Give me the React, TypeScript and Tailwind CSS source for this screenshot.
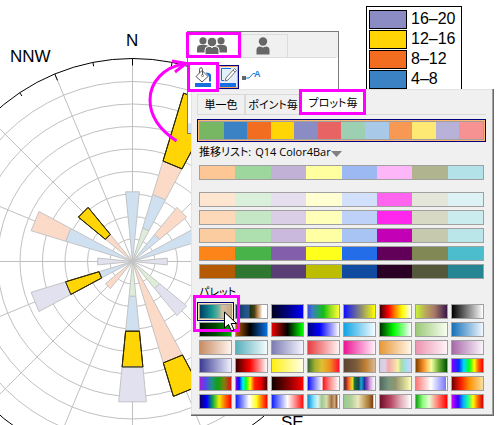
import { useState } from 'react';
import clsx from 'clsx';

type BarKind = 'blue' | 'peach' | 'green' | 'lavender' | 'yellow';

interface Petal {
  angle: number;
  parts: { to: number; kind: BarKind }[];
}

const CX = 132.5;
const CY = 261.5;
const RING = 22.5;
const HALF_WIDTH = 5.625;

const barFill: Record<BarKind, string> = {
  blue: 'fill-[#cfe0f1] stroke-[#c4c4c4]',
  peach: 'fill-[#fcdac8] stroke-[#c4c4c4]',
  green: 'fill-[#ddedd8] stroke-[#c4c4c4]',
  lavender: 'fill-[#e1e1f0] stroke-[#c4c4c4]',
  yellow: 'fill-[#ffd505] stroke-[#2b2605]',
};

// radius of each stacked part, clockwise from north
const petals: Petal[] = [
  { angle: 0, parts: [{ to: 70, kind: 'blue' }] },
  {
    angle: 22.5,
    parts: [
      { to: 35, kind: 'green' },
      { to: 70, kind: 'blue' },
      { to: 105, kind: 'peach' },
      { to: 176, kind: 'yellow' },
    ],
  },
  { angle: 45, parts: [{ to: 35, kind: 'blue' }, { to: 70, kind: 'peach' }] },
  { angle: 67.5, parts: [{ to: 105, kind: 'blue' }] },
  { angle: 90, parts: [{ to: 35, kind: 'lavender' }] },
  { angle: 135, parts: [{ to: 35, kind: 'green' }, { to: 70, kind: 'lavender' }] },
  { angle: 157.5, parts: [{ to: 106, kind: 'peach' }, { to: 141, kind: 'yellow' }] },
  {
    angle: 180,
    parts: [
      { to: 35, kind: 'green' },
      { to: 70, kind: 'blue' },
      { to: 106, kind: 'yellow' },
      { to: 141, kind: 'lavender' },
    ],
  },
  { angle: 225, parts: [{ to: 35, kind: 'peach' }] },
  {
    angle: 247.5,
    parts: [
      { to: 35, kind: 'blue' },
      { to: 70, kind: 'yellow' },
      { to: 106, kind: 'lavender' },
    ],
  },
  { angle: 270, parts: [{ to: 35, kind: 'lavender' }] },
  { angle: 292.5, parts: [{ to: 70, kind: 'blue' }, { to: 106, kind: 'peach' }] },
  { angle: 315, parts: [{ to: 35, kind: 'peach' }, { to: 70, kind: 'yellow' }] },
];

const legend = [
  { label: '16–20', color: 'bg-[#8b8cc4]' },
  { label: '12–16', color: 'bg-[#ffd505]' },
  { label: '8–12', color: 'bg-[#f36d21]' },
  { label: '4–8', color: 'bg-[#3b82c4]' },
];

const activeColors = [
  'bg-[#77b662]', 'bg-[#3b82c4]', 'bg-[#f36d21]', 'bg-[#ffd505]',
  'bg-[#8b8cc4]', 'bg-[#e86464]', 'bg-[#9dcfb2]', 'bg-[#a9c9e8]',
  'bg-[#f79853]', 'bg-[#ffe975]', 'bg-[#b8b2d8]', 'bg-[#f69292]',
];

const baseColors = [
  'bg-[#fcc795]', 'bg-[#9dd79d]', 'bg-[#c1b1d7]', 'bg-[#ffffa0]',
  'bg-[#9cb9f4]', 'bg-[#fdb6f8]', 'bg-[#b1b58f]', 'bg-[#b3e3e9]',
];

const variations = [
  [
    'bg-[#fee5d0]', 'bg-[#daf0da]', 'bg-[#e5deee]', 'bg-[#ffffd2]',
    'bg-[#d3e0fb]', 'bg-[#ff64ee]', 'bg-[#e5e6da]', 'bg-[#dcf2f4]',
  ],
  [
    'bg-[#fed9b9]', 'bg-[#c6e7c5]', 'bg-[#dacde6]', 'bg-[#ffffba]',
    'bg-[#bdd1f9]', 'bg-[#ff26ee]', 'bg-[#d8d9c4]', 'bg-[#caecee]',
  ],
  [
    'bg-[#fccca1]', 'bg-[#aedfae]', 'bg-[#cab9dc]', 'bg-[#ffffa4]',
    'bg-[#a7c4f5]', 'bg-[#c400b6]', 'bg-[#c6c9ad]', 'bg-[#bae6ea]',
  ],
  [
    'bg-[#fd8418]', 'bg-[#48b348]', 'bg-[#835eab]', 'bg-[#ffff1c]',
    'bg-[#246de8]', 'bg-[#620059]', 'bg-[#828756]', 'bg-[#4cbdcd]',
  ],
  [
    'bg-[#b45a03]', 'bg-[#2f7731]', 'bg-[#583e74]', 'bg-[#bdbd00]',
    'bg-[#114b9f]', 'bg-[#2a0025]', 'bg-[#55573b]', 'bg-[#258593]',
  ],
];

const palettes: string[][] = [
  ['#00405f', '#0a6a80', '#1a9a92', '#6fb09a 60%', '#d2bfa2 72%', '#c4aa88'],
  ['#14304f', '#1f5590 30%', '#2a5a80 42%', '#1c3010 46%', '#4a4418 60%', '#c08850 70%', '#e8d0b8 80%', '#fff 85%'],
  ['#000020', '#000080', '#0000ff'],
  ['#3b50e0', '#3a80c0 15%', '#10c010 50%', '#a0e020 75%', '#ffff38'],
  ['#1010ff', '#808080', '#ffff00'],
  ['#400000', '#ff0000 28%', '#ff8000 48%', '#ffff00 72%', '#fff'],
  ['#c6f038', '#b8a060 35%', '#a87868 60%', '#381848'],
  ['#000', '#fff'],

  ['#001400', '#004800', '#00a800'],
  ['#b85c08', '#000 45%', '#0a70e0'],
  ['#e80000', '#000 50%', '#00ff00'],
  ['#000080', '#0000ff 38%', '#fff'],
  ['#10a4e4', '#f4fcff'],
  ['#003000', '#00ff00 45%', '#fff'],
  ['#9cc878', '#f8fff0'],
  ['#1470b8', '#f0f8ff'],

  ['#c88c64', '#fff4ee'],
  ['#58b0bc', '#f4fcfc'],
  ['#7c7cb4', '#f4f4ff'],
  ['#e83c40', '#fff4f4'],
  ['#ec1494', '#fff0f8'],
  ['#e89838', '#fff6e8'],
  ['#ec94b0', '#fff4f8'],
  ['#a868a8', '#fbf4fb'],

  ['#3c3c94', '#f0f0ff'],
  ['#400000', '#ff0000 45%', '#fff'],
  ['#fff010', '#ffffe8'],
  ['#386830', '#a0b030 22%', '#e0c030 45%', '#f09020 70%', '#ff1030'],
  ['#5c4430', '#7c5c3c 40%', '#c08030 70%', '#d8b898'],
  ['#ccd', '#e0d0e8 15%', '#f4a8a8 28%', '#f4d0b0 45%', '#f8f4a0 58%', '#a8dca0 68%', '#a0e0f0 85%', '#d8d0f0'],
  ['#804000', '#f08820 22%', '#ffd070 38%', '#f0ffa0 50%', '#60a830 75%', '#005000'],
  ['#8000ff', '#0030ff 22%', '#00d8ff 38%', '#00ff20 55%', '#ffff00 72%', '#ff6000 85%', '#ff0000'],

  ['#a020d0', '#5048f0 18%', '#209080 38%', '#10a010 58%', '#808010 78%', '#e01010'],
  ['#8000e0', '#0010ff 10%', '#00f0ff 22%', '#00ff20 32%', '#ffff00 45%', '#ff2000 60%', '#f00000 80%', '#500000'],
  ['#100000', '#800000', '#ff0000'],
  ['#1010ff', '#b0b0ff 30%', '#fff 46%', '#ff1010 48%', '#ff8080 68%', '#fff'],
  ['#603830 6%', '#f03030 10%', '#f0a020 20%', '#e0e030 28%', '#207030 34%', '#104060 48%', '#10b0d0 55%', '#2030a0 66%', '#a050b0 76%', '#d0a0e0 84%', '#f0f0f8 96%'],
  ['#506860', '#78987c 28%', '#949470 50%', '#c4c488 72%', '#ffffb8'],
  ['#ff7878', '#fff 48%', '#7878ff 96%', '#fff 97%'],
  ['#700000', '#ff2000 30%', '#ff9000 55%', '#f8e0a0'],

  ['#100060', '#0000ff 22%', '#10b040 42%', '#f0f000 62%', '#ff7000 80%', '#ff0000'],
  ['#1020ff', '#fff 42%', '#ffff20 66%', '#ff8000 82%', '#ff0000'],
  ['#1020ff', '#fff 50%', '#ff1010'],
  ['#1090d0', '#80e0ff 18%', '#e0f4f0 32%', '#a0c890 44%', '#d8dcb0 60%', '#a87040 76%', '#d0a880 86%', '#7c4018 94%', '#fff 96%'],
  ['#98c890', '#b0d098 22%', '#ece8c0 45%', '#c8a868 65%', '#a87838 80%', '#804010 93%', '#fff 96%'],
  ['#701028', '#b84864 35%', '#e0a8b4 65%', '#fff'],
  ['#10a010', '#90ff80 22%', '#e8ffd8 42%', '#ff9080 66%', '#ff0000'],
  ['#d000ff', '#3000ff 20%', '#00b0ff 36%', '#20ff90 52%', '#ffff00 68%', '#ff6000 84%', '#d00000'],
];

function polar(angle: number, r: number) {
  const a = (angle * Math.PI) / 180;
  return `${(CX + r * Math.sin(a)).toFixed(1)},${(CY - r * Math.cos(a)).toFixed(1)}`;
}

function RoseChart() {
  return (
    <svg width="340" height="470" className="block shrink-0 font-['Liberation_Sans',sans-serif]" aria-label="Wind rose">
      <g className="fill-none stroke-[#c0c0c0]" strokeWidth="1">
        {Array.from({ length: 8 }, (_, i) => (
          <circle key={i} cx={CX} cy={CY} r={RING * (i + 1)} />
        ))}
        {Array.from({ length: 16 }, (_, i) => (
          <polyline key={i} points={`${CX},${CY} ${polar(i * 22.5, 202)}`} />
        ))}
      </g>
      <g className="fill-none stroke-black" strokeWidth="1">
        <circle cx={CX} cy={CY} r="203" />
        {Array.from({ length: 32 }, (_, i) => (
          <polyline key={i} points={`${polar(i * 11.25, 203)} ${polar(i * 11.25, i % 2 ? 199 : 196)}`} />
        ))}
      </g>
      {petals.map(({ angle, parts }) =>
        parts.map(({ to, kind }, i) => {
          const from = i === 0 ? 0 : parts[i - 1].to;
          const l = angle - HALF_WIDTH;
          const r = angle + HALF_WIDTH;
          return (
            <polygon
              key={`${angle}-${to}`}
              className={barFill[kind]}
              points={[polar(l, from), polar(l, to), polar(r, to), polar(r, from)].join(' ')}
            />
          );
        }),
      )}
      {/* yellow outlines stay above their neighbours */}
      {petals.map(({ angle, parts }) =>
        parts.map(({ to, kind }, i) =>
          kind === 'yellow' ? (
            <polygon
              key={`${angle}-${to}`}
              className="fill-none stroke-[#2b2605]"
              points={[
                polar(angle - HALF_WIDTH, parts[i - 1].to),
                polar(angle - HALF_WIDTH, to),
                polar(angle + HALF_WIDTH, to),
                polar(angle + HALF_WIDTH, parts[i - 1].to),
              ].join(' ')}
            />
          ) : null,
        ),
      )}
      <g className="fill-black text-[17px]">
        <text x="126" y="46">N</text>
        <text x="10" y="62">NNW</text>
        <text x="281" y="428">SE</text>
      </g>
    </svg>
  );
}

function Legend() {
  return (
    <ul className="ml-[26px] mt-1.5 flex h-28 w-24 shrink-0 flex-col border border-black bg-white pl-0.5 pt-0.5">
      {legend.map((item) => (
        <li key={item.label} className="flex h-5 shrink-0 items-center gap-1">
          <span className={clsx('h-[19px] w-[38px] border border-black', item.color)} />
          <span className="font-['Liberation_Sans',sans-serif] text-[16px] leading-5 text-black">{item.label}</span>
        </li>
      ))}
    </ul>
  );
}

function GroupIcon() {
  return (
    <svg width="30" height="18" viewBox="0 0 30 18" className="fill-[#666]">
      <circle cx="6" cy="3.8" r="3.6" />
      <path d="M0 15.500V11.500Q0 8 3.500 8H8.500Q11.500 8 11.500 11V15.500Z" />
      <circle cx="24" cy="3.800" r="3.600" />
      <path d="M30 15.500V11.500Q30 8 26.500 8H21.500Q18.500 8 18.500 11V15.500Z" />
      <g className="stroke-white" strokeWidth="1">
        <path d="M8 17.500V13Q8 9.500 11.500 9.500L13.500 9.500L15 10.500L16.500 9.500H18.500Q22 9.500 22 13V17.500Z" />
        <circle cx="15" cy="5" r="4.800" />
      </g>
    </svg>
  );
}

function PersonIcon() {
  return (
    <svg width="14" height="18" viewBox="0 0 14 18" className="fill-[#666]">
      <circle cx="7" cy="4.500" r="4.200" />
      <path d="M0.500 17.500V13Q0.500 9.500 4 9.500L7 10.500L10 9.500Q13.500 9.500 13.500 13V17.500Z" />
    </svg>
  );
}

function BucketIcon() {
  return (
    <svg width="17" height="20" viewBox="0 0 17 20" className="fill-none">
      <path d="M1 9.500L7 3.500L13 9.500L7 15Z" className="fill-white stroke-[#555]" />
      <path d="M4.500 6V2.500Q4.500 0.700 6 0.700T7.500 2.500V8" className="stroke-[#555]" />
      <circle cx="7.500" cy="8.500" r="1" className="stroke-[#555]" strokeWidth="0.800" />
      <path d="M10.500 5.500Q16 5.500 16 8.500V14.500H14V9.500Z" className="fill-[#1a6fd8]" />
      <rect y="16" width="16" height="4" className="fill-[#1a6fe0]" />
    </svg>
  );
}

function PenIcon() {
  return (
    <svg width="17" height="20" viewBox="0 0 17 20" className="shrink-0 fill-none">
      <path d="M11 1.500H1.500V13.500H4" className="stroke-[#1a6fd8]" />
      <path d="M5 14L6 11L14.500 1.500L16.500 3.500L8 13Z" className="fill-white stroke-[#666]" strokeWidth="0.900" />
      <path d="M13 3L15 5" className="stroke-[#666]" strokeWidth="0.900" />
      <rect y="16" width="16" height="4" className="fill-[#1a6fe0]" />
    </svg>
  );
}

function LabelLineIcon() {
  return (
    <svg width="20" height="14" viewBox="0 0 20 14" className="fill-none">
      <rect y="7" width="4" height="4" className="fill-[#666]" />
      <path d="M4 9H7L11 4.500H13" className="stroke-[#1a7fd8]" />
      <text x="12" y="8" className="fill-[#1a7fe0] font-['Liberation_Sans',sans-serif] text-[9px] font-bold">
        A
      </text>
    </svg>
  );
}

function FormatPopup() {
  return (
    <section className="absolute left-[187px] top-[31px] flex h-[103px] w-[152px] flex-col border border-[#7a7a7a] bg-white">
      <div role="tablist" className="flex h-[26px] items-end bg-[#f0f0f0] pr-0.5">
        <button role="tab" aria-selected="true" aria-label="Group" className="flex h-6 w-[53px] items-center bg-white pl-[9px]">
          <GroupIcon />
        </button>
        <button
          role="tab"
          aria-selected="false"
          aria-label="Single"
          className="flex h-6 w-[47px] items-center justify-center border border-[#dcdcdc] pr-1"
        >
          <PersonIcon />
        </button>
        <span className="flex-1 border-b border-[#dcdcdc]" />
      </div>
      <div className="flex grow items-start pt-[7px]">
        <button aria-label="Fill" className="flex h-6 w-[30px] items-center justify-center">
          <BucketIcon />
        </button>
        <button
          aria-label="Line"
          className="flex h-6 w-[21px] items-center justify-center border border-[#000080] bg-[#e3f0fb] ring-1 ring-inset ring-[#f9a05c]"
        >
          <PenIcon />
        </button>
        <button aria-label="Label" className="ml-[3px] flex h-6 items-start pt-1">
          <LabelLineIcon />
        </button>
      </div>
      <div className="h-2.5 bg-[#d5e3f5]" />
    </section>
  );
}

function ColorBar({ colors, label }: { colors: string[]; label: string }) {
  return (
    <button aria-label={label} className="flex h-[15px] w-full border border-[#a0a0a0]">
      {colors.map((c) => (
        <span key={c} className={clsx('h-full flex-1', c)} />
      ))}
    </button>
  );
}

const tabs = [
  { label: '単一色', width: 'w-12' },
  { label: 'ポイント毎', width: 'w-14' },
  { label: 'プロット毎', width: 'w-16' },
];

function ColorPanel() {
  const [tab, setTab] = useState(2);
  const [palette, setPalette] = useState(0);

  return (
    <section className="absolute left-[191px] right-1.5 top-[89px] border-b border-r border-[#696969] bg-[#f0f0f0] pb-1.5 pl-1.5 pr-[7px] pt-px text-[11px] text-black shadow-[inset_-1px_-1px_0_#a0a0a0,inset_1px_1px_0_#e3e3e3]">
      <div role="tablist" className="flex h-[25px] items-end border-b border-[#dadada]">
        {tabs.map((t, i) => (
          <button
            key={t.label}
            role="tab"
            aria-selected={tab === i}
            onClick={() => setTab(i)}
            className={clsx(
              "whitespace-nowrap border-x border-t border-[#dadada] text-center leading-5 [font-feature-settings:'palt']",
              t.width,
              tab === i ? 'h-[23px] bg-white' : 'h-5',
            )}
          >
            {t.label}
          </button>
        ))}
      </div>

      <button
        aria-label="Current colors"
        className="mt-1 flex h-[23px] w-full border border-[#000080] bg-[#ffb870] p-px"
      >
        <span className="flex h-full w-full border border-[#a0a0a0]">
          {activeColors.map((c) => (
            <span key={c} className={clsx('h-full flex-1', c)} />
          ))}
        </span>
      </button>

      <div className="mx-0.5">
        <div className="flex h-[23px] items-center pb-1 leading-4">
          <label htmlFor="increment" className="whitespace-nowrap [font-feature-settings:'palt']">
            推移リスト:
          </label>
          <select id="increment" className="ml-1 appearance-none bg-transparent [field-sizing:content]">
            <option>Q14 Color4Bar</option>
          </select>
          <svg width="11" height="6" className="mt-1 fill-[#808080]">
            <path d="M0 0H11L5.500 6Z" />
          </svg>
        </div>

        <ColorBar colors={baseColors} label="Base colors" />
        <div className="mt-3 flex flex-col gap-[3px]">
          {variations.map((row, i) => (
            <ColorBar key={i} colors={row} label={`Variation ${i + 1}`} />
          ))}
        </div>

        <h3 className="flex h-[25px] items-center leading-4 [font-feature-settings:'palt']">パレット</h3>

        <div className="grid grid-cols-8 gap-[3px]">
          {palettes.map((stops, i) => (
            <button
              key={i}
              aria-label={`Palette ${i + 1}`}
              onClick={() => setPalette(i)}
              className={clsx(
                'h-[15px] border border-[#a0a0a0] bg-white',
                palette === i && 'outline outline-offset-1 outline-[#000080] ring-1 ring-[#fbe3b8]',
              )}
              style={{ backgroundImage: `linear-gradient(to right, ${stops.join(', ')})` }}
            />
          ))}
        </div>
      </div>
    </section>
  );
}

function Annotations() {
  return (
    <div className="pointer-events-none">
      <span className="absolute left-[186px] top-8 h-[26px] w-[55px] border-3 border-[#ff00ff]" />
      <span className="absolute left-[187px] top-[62px] h-[30px] w-8 border-3 border-[#ff00ff]" />
      <span className="absolute left-[299px] top-[89px] h-[26px] w-[67px] border-3 border-[#ff00ff]" />
      <span className="absolute left-[193px] top-[295px] h-[37px] w-[47px] border-3 border-[#ff00ff]" />
      <svg width="45" height="90" className="absolute left-[145px] top-[55px] fill-none stroke-[#ff00ff]" strokeWidth="3">
        <path d="M31.500 86C18 77 5 64 5 45C5 27 19 12 39 9" />
        <path d="M27 6L41 8.500L30 17" />
      </svg>
      <svg width="14" height="21" className="absolute left-[224px] top-[311px] fill-white stroke-black">
        <path d="M0.500 1V17L4.500 13.500L7.500 20L10 19L7.200 12.500H12.500Z" />
      </svg>
    </div>
  );
}

export default function App() {
  return (
    <main className="relative flex h-screen items-start overflow-hidden bg-white font-['Open_Sans','Noto_Sans_CJK_JP',sans-serif]">
      <RoseChart />
      <Legend />
      <FormatPopup />
      <ColorPanel />
      <Annotations />
    </main>
  );
}
